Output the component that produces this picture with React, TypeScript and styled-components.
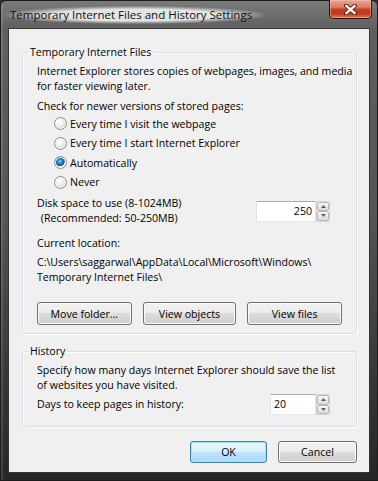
import styled, { createGlobalStyle } from 'styled-components';

const GlobalStyle = createGlobalStyle`
  html, body {
    margin: 0;
    padding: 0;
    background: #2e2e2e;
  }
  body {
    font-family: 'Open Sans', 'Noto Sans', sans-serif;
    font-size: 10.6px;
    color: #000;
  }
`;

const Window = styled.div`
  width: 378px;
  height: 481px;
  box-sizing: border-box;
  border: 1px solid #1c1c1c;
  border-radius: 6px 6px 0 0;
  padding: 0 7px 7px 7px;
  display: flex;
  flex-direction: column;
  background:
    linear-gradient(90deg, rgba(255, 255, 255, 0.18) 0, rgba(255, 255, 255, 0) 3px),
    linear-gradient(180deg, #7a7a7a 0, #5f5f5f 28px, #545454 45%, #3a3a3a 75%, #262626 100%);
`;

const TitleBar = styled.div`
  height: 27px;
  display: flex;
  justify-content: space-between;
  align-items: flex-start;
`;

const Title = styled.div`
  margin-top: 5px;
  margin-left: -4px;
  padding: 0 14px 0 6px;
  line-height: 18px;
  font-size: 11.5px;
  color: #111;
  white-space: nowrap;
  background: radial-gradient(ellipse at center, rgba(235, 235, 235, 0.95) 45%, rgba(220, 220, 220, 0) 72%);
`;

const CloseButton = styled.div`
  width: 43px;
  height: 19px;
  margin-top: -1px;
  margin-right: -2px;
  box-sizing: border-box;
  border: 1px solid #3a0e08;
  border-top: 0;
  border-radius: 0 0 5px 5px;
  display: flex;
  align-items: center;
  justify-content: center;
  background: linear-gradient(180deg, #e6a896 0%, #d97b63 40%, #c53f1f 52%, #c0391c 75%, #db7a55 100%);
  box-shadow: inset 0 0 0 1px rgba(255, 200, 180, 0.45);
`;

const Client = styled.div`
  flex: 1;
  box-sizing: border-box;
  border: 1px solid #353535;
  background: #f0f0f0;
  padding: 16px 12px 0 13px;
  display: flex;
  flex-direction: column;
`;

const Group = styled.fieldset<{ $pt: number; $pb: number }>`
  margin: 0;
  border: 1px solid #d5dfe5;
  border-radius: 3px;
  box-shadow: 1px 1px 0 #fff, inset 1px 1px 0 #fff;
  padding: ${p => p.$pt}px 14px ${p => p.$pb}px 14px;
  min-width: 0;
  & + & {
    margin-top: 10px;
  }
`;

const Legend = styled.legend`
  padding: 0 2px;
  margin-left: -9px;
  line-height: 15px;
`;

const Line = styled.div<{ $mt?: number }>`
  line-height: 15px;
  white-space: nowrap;
  margin-top: ${p => p.$mt ?? 0}px;
`;

const RadioList = styled.div`
  padding-left: 17px;
  display: flex;
  flex-direction: column;
`;

const RadioRow = styled.label`
  height: 19.5px;
  display: flex;
  align-items: center;
  gap: 2px;
  white-space: nowrap;
`;

const RadioDot = styled.span<{ $on?: boolean }>`
  width: 13px;
  height: 13px;
  box-sizing: border-box;
  border-radius: 50%;
  border: 1px solid #8f8f8f;
  flex-shrink: 0;
  margin-right: 1px;
  background: ${p =>
    p.$on
      ? 'radial-gradient(circle at 45% 40%, #8fd6f7 0, #2a8fd0 2px, #125e95 4px, #0e4d7c 4.5px, #f4f4f4 5px, #d9d9d9 100%)'
      : 'radial-gradient(circle at 40% 35%, #ffffff 0, #f1f1f1 35%, #d6d6d6 80%, #cfcfcf 100%)'};
  box-shadow: inset 0 0 0 1px #f7f7f7;
`;

const Row = styled.div<{ $mt: number }>`
  display: flex;
  align-items: center;
  justify-content: space-between;
  margin-top: ${p => p.$mt}px;
`;

const CenterLabel = styled.div`
  display: inline-block;
  text-align: center;
  line-height: 15px;
  white-space: nowrap;
`;

const Spinner = styled.div<{ $mr: number }>`
  display: flex;
  height: 21px;
  margin-right: ${p => p.$mr}px;
`;

const SpinField = styled.div<{ $w: number; $right?: boolean }>`
  width: ${p => p.$w}px;
  box-sizing: border-box;
  background: #fff;
  border: 1px solid;
  border-color: #abadb3 #dbdfe6 #e3e9ef #e2e3ea;
  padding: 0 3px;
  line-height: 19px;
  text-align: ${p => (p.$right ? 'right' : 'left')};
`;

const SpinArrows = styled.div`
  width: 14px;
  box-sizing: border-box;
  border: 1px solid #d6d6d6;
  display: flex;
  flex-direction: column;
  background: #fff;
`;

const SpinArrow = styled.div`
  flex: 1;
  box-sizing: border-box;
  border: 1px solid #b6b6b6;
  border-radius: 2px;
  display: flex;
  align-items: center;
  justify-content: center;
  background: linear-gradient(180deg, #f5f5f5, #dcdcdc);
`;

const ButtonRow = styled.div<{ $mt: number; $end?: boolean }>`
  display: flex;
  justify-content: ${p => (p.$end ? 'flex-end' : 'space-between')};
  gap: 11px;
  margin-top: ${p => p.$mt}px;
`;

const Button = styled.button<{ $w: number; $h: number; $def?: boolean }>`
  width: ${p => p.$w}px;
  height: ${p => p.$h}px;
  box-sizing: border-box;
  padding: 0;
  font-family: inherit;
  font-size: 10.6px;
  color: #000;
  border-radius: 3px;
  border: 1px solid ${p => (p.$def ? '#3c7fb1' : '#707070')};
  background: ${p =>
    p.$def
      ? 'linear-gradient(180deg, #eaf6fd 0%, #d9f0fc 50%, #bee6fd 50%, #a7d9f5 100%)'
      : 'linear-gradient(180deg, #f2f2f2 0%, #ebebeb 50%, #dddddd 50%, #cfcfcf 100%)'};
  box-shadow: inset 0 0 0 1px ${p => (p.$def ? '#9ee4fd' : '#fcfcfc')};
`;

function Triangle({ up }: { up?: boolean }) {
  return (
    <svg width="5" height="3" viewBox="0 0 5 3">
      <polygon points={up ? '0,3 5,3 2.5,0' : '0,0 5,0 2.5,3'} fill="#4d6185" />
    </svg>
  );
}

function SpinBox({ value, w, right, mr }: { value: string; w: number; right?: boolean; mr: number }) {
  return (
    <Spinner $mr={mr}>
      <SpinField $w={w} $right={right}>{value}</SpinField>
      <SpinArrows>
        <SpinArrow><Triangle up /></SpinArrow>
        <SpinArrow><Triangle /></SpinArrow>
      </SpinArrows>
    </Spinner>
  );
}

function Radio({ label, on }: { label: string; on?: boolean }) {
  return (
    <RadioRow>
      <RadioDot $on={on} />
      {label}
    </RadioRow>
  );
}

function App() {
  return (
    <>
      <GlobalStyle />
      <Window>
        <TitleBar>
          <Title>Temporary Internet Files and History Settings</Title>
          <CloseButton>
            <svg width="13" height="11" viewBox="0 0 13 11">
              <path d="M2 1.5 L11 9.5 M11 1.5 L2 9.5" stroke="#5a1a0c" strokeWidth="4" strokeLinecap="round" />
              <path d="M2.3 1.8 L10.7 9.2 M10.7 1.8 L2.3 9.2" stroke="#fff" strokeWidth="2.4" strokeLinecap="round" />
            </svg>
          </CloseButton>
        </TitleBar>
        <Client>
          <Group $pt={4} $pb={8}>
            <Legend>Temporary Internet Files</Legend>
            <Line>Internet Explorer stores copies of webpages, images, and media</Line>
            <Line>for faster viewing later.</Line>
            <Line $mt={5}>Check for newer versions of stored pages:</Line>
            <RadioList>
              <Radio label="Every time I visit the webpage" />
              <Radio label="Every time I start Internet Explorer" />
              <Radio label="Automatically" on />
              <Radio label="Never" />
            </RadioList>
            <Row $mt={4}>
              <CenterLabel>
                Disk space to use (8-1024MB)
                <br />
                (Recommended: 50-250MB)
              </CenterLabel>
              <SpinBox value="250" w={60} right mr={12} />
            </Row>
            <Line $mt={10}>Current location:</Line>
            <Line $mt={4}>C:\Users\saggarwal\AppData\Local\Microsoft\Windows\</Line>
            <Line>Temporary Internet Files\</Line>
            <ButtonRow $mt={17}>
              <Button $w={96} $h={23}>Move folder...</Button>
              <Button $w={95} $h={23}>View objects</Button>
              <Button $w={96} $h={23}>View files</Button>
            </ButtonRow>
          </Group>
          <Group $pt={4} $pb={11}>
            <Legend>History</Legend>
            <Line>Specify how many days Internet Explorer should save the list</Line>
            <Line>of websites you have visited.</Line>
            <Row $mt={1}>
              <Line>Days to keep pages in history:</Line>
              <SpinBox value="20" w={46} mr={12} />
            </Row>
          </Group>
          <ButtonRow $mt={14} $end>
            <Button $w={77} $h={22} $def>OK</Button>
            <Button $w={79} $h={22}>Cancel</Button>
          </ButtonRow>
        </Client>
      </Window>
    </>
  );
}

export default App;
